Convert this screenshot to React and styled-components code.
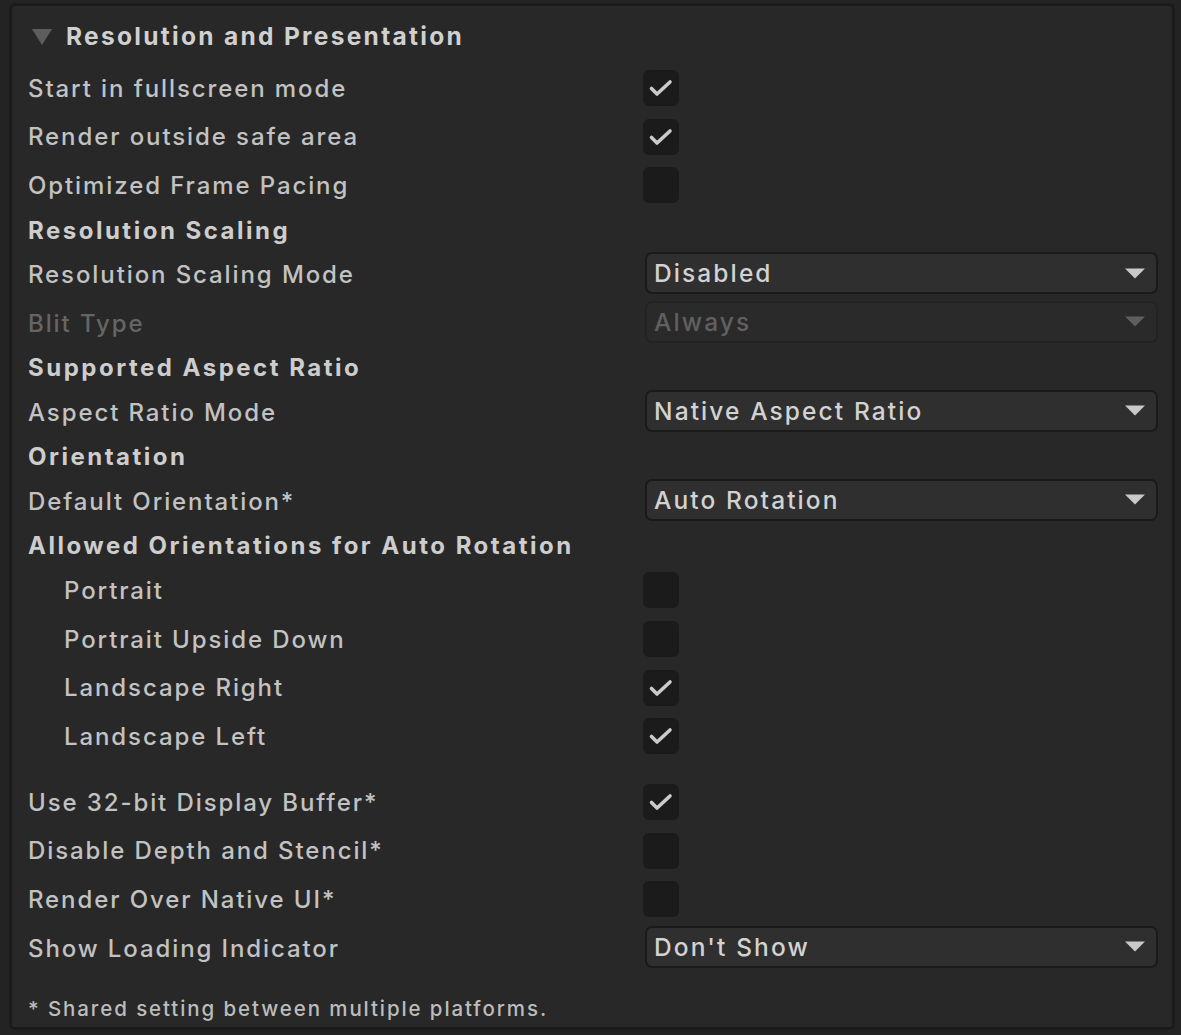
import React from 'react';
import styled, { createGlobalStyle } from 'styled-components';

const GlobalStyle = createGlobalStyle`
    html, body {
        margin: 0;
        padding: 0;
        background: #232323;
    }
    body {
        font-family: Inter, "Noto Sans", "Liberation Sans", sans-serif;
        -webkit-font-smoothing: antialiased;
    }
`

const rows = [
    { type: 'toggle', label: 'Start in fullscreen mode', checked: true },
    { type: 'toggle', label: 'Render outside safe area', checked: true },
    { type: 'toggle', label: 'Optimized Frame Pacing', checked: false },
    { type: 'header', label: 'Resolution Scaling' },
    { type: 'popup', label: 'Resolution Scaling Mode', value: 'Disabled' },
    { type: 'popup', label: 'Blit Type', value: 'Always', disabled: true },
    { type: 'header', label: 'Supported Aspect Ratio' },
    { type: 'popup', label: 'Aspect Ratio Mode', value: 'Native Aspect Ratio' },
    { type: 'header', label: 'Orientation' },
    { type: 'popup', label: 'Default Orientation*', value: 'Auto Rotation' },
    { type: 'header', label: 'Allowed Orientations for Auto Rotation' },
    { type: 'toggle', label: 'Portrait', checked: false, indent: true },
    { type: 'toggle', label: 'Portrait Upside Down', checked: false, indent: true },
    { type: 'toggle', label: 'Landscape Right', checked: true, indent: true },
    { type: 'toggle', label: 'Landscape Left', checked: true, indent: true },
    { type: 'space' },
    { type: 'toggle', label: 'Use 32-bit Display Buffer*', checked: true },
    { type: 'toggle', label: 'Disable Depth and Stencil*', checked: false },
    { type: 'toggle', label: 'Render Over Native UI*', checked: false },
    { type: 'popup', label: 'Show Loading Indicator', value: "Don't Show" },
];

const Check = () => (
    <svg width="36" height="36" viewBox="0 0 36 36">
        <polyline points="8.5,18.5 14,24 27,12" fill="none" stroke="#cbcbcb" strokeWidth="3.6" strokeLinecap="round" strokeLinejoin="round" />
    </svg>
)

const Arrow = ({ disabled }) => (
    <svg width="20" height="11" viewBox="0 0 20 11">
        <polygon points="0,0.5 20,0.5 10,10.5" fill={disabled ? '#5e5e5e' : '#c9c9c9'} />
    </svg>
)

const PlayerSettings = () => {
    return (
        <Page>
            <GlobalStyle />
            <Panel>
                <Foldout>
                    <Triangle viewBox="0 0 20 16">
                        <polygon points="0,0 20,0 10,16" />
                    </Triangle>
                    <FoldoutTitle>Resolution and Presentation</FoldoutTitle>
                </Foldout>

                {rows.map((row, i) => {
                    if (row.type === 'space') return <Spacer key={i} />
                    if (row.type === 'header') return <SectionHeader key={i}>{row.label}</SectionHeader>
                    return (
                        <Row key={i}>
                            <Label $indent={row.indent} $disabled={row.disabled}>{row.label}</Label>
                            {row.type === 'toggle' ? (
                                <Toggle>{row.checked && <Check />}</Toggle>
                            ) : (
                                <Popup $disabled={row.disabled}>
                                    <span>{row.value}</span>
                                    <Arrow disabled={row.disabled} />
                                </Popup>
                            )}
                        </Row>
                    )
                })}

                <Footnote>* Shared setting between multiple platforms.</Footnote>
            </Panel>
        </Page>
    )
}

const Page = styled.div`
    width: 1181px;
    height: 1035px;
    box-sizing: border-box;
    padding: 3px 6px 5px 9px;
    overflow: hidden;
`

const Panel = styled.div`
    height: 100%;
    box-sizing: border-box;
    background: #282828;
    border: 3px solid #1b1b1b;
    border-radius: 6px;
    padding: 2px 14px 0 16px;
    display: flex;
    flex-direction: column;
`

const Foldout = styled.div`
    height: 56px;
    display: flex;
    align-items: center;
    gap: 14px;
    padding-left: 4px;
`

const Triangle = styled.svg`
    width: 20px;
    height: 16px;
    fill: #5d5d5d;
    margin-top: 2px;
`

const FoldoutTitle = styled.span`
    font-size: 24.5px;
    font-weight: 700;
    letter-spacing: 2.3px;
    color: #d0d0d0;
`

const Row = styled.div`
    height: 48.6px;
    flex-shrink: 0;
    display: flex;
    align-items: center;
`

const Label = styled.div`
    width: 615px;
    flex-shrink: 0;
    box-sizing: border-box;
    padding-left: ${p => (p.$indent ? '36px' : '0')};
    font-size: 24px;
    font-weight: 500;
    letter-spacing: 1.9px;
    color: ${p => (p.$disabled ? '#656565' : '#c2c2c2')};
    white-space: nowrap;
`

const SectionHeader = styled.div`
    height: 40.5px;
    flex-shrink: 0;
    display: flex;
    align-items: center;
    font-size: 24px;
    font-weight: 700;
    letter-spacing: 2.5px;
    color: #cdcdcd;
`

const Toggle = styled.div`
    width: 36px;
    height: 36px;
    border-radius: 6px;
    background: #1b1b1b;
    display: flex;
`

const Popup = styled.div`
    flex: 1;
    height: 42px;
    margin-left: 2px;
    margin-top: -3px;
    box-sizing: border-box;
    border: 2px solid ${p => (p.$disabled ? '#232323' : '#1a1a1a')};
    border-radius: 7px;
    background: ${p => (p.$disabled ? '#2a2a2a' : '#2f2f2f')};
    display: flex;
    align-items: center;
    justify-content: space-between;
    padding: 0 11px 0 7px;
    font-size: 24.5px;
    font-weight: 500;
    letter-spacing: 2.1px;
    color: ${p => (p.$disabled ? '#606060' : '#d2d2d2')};
`

const Spacer = styled.div`
    height: 17.4px;
    flex-shrink: 0;
`

const Footnote = styled.div`
    margin-top: 18px;
    height: 36px;
    display: flex;
    align-items: center;
    font-size: 20.5px;
    font-weight: 500;
    letter-spacing: 1.9px;
    color: #bcbcbc;
`

export default PlayerSettings;
